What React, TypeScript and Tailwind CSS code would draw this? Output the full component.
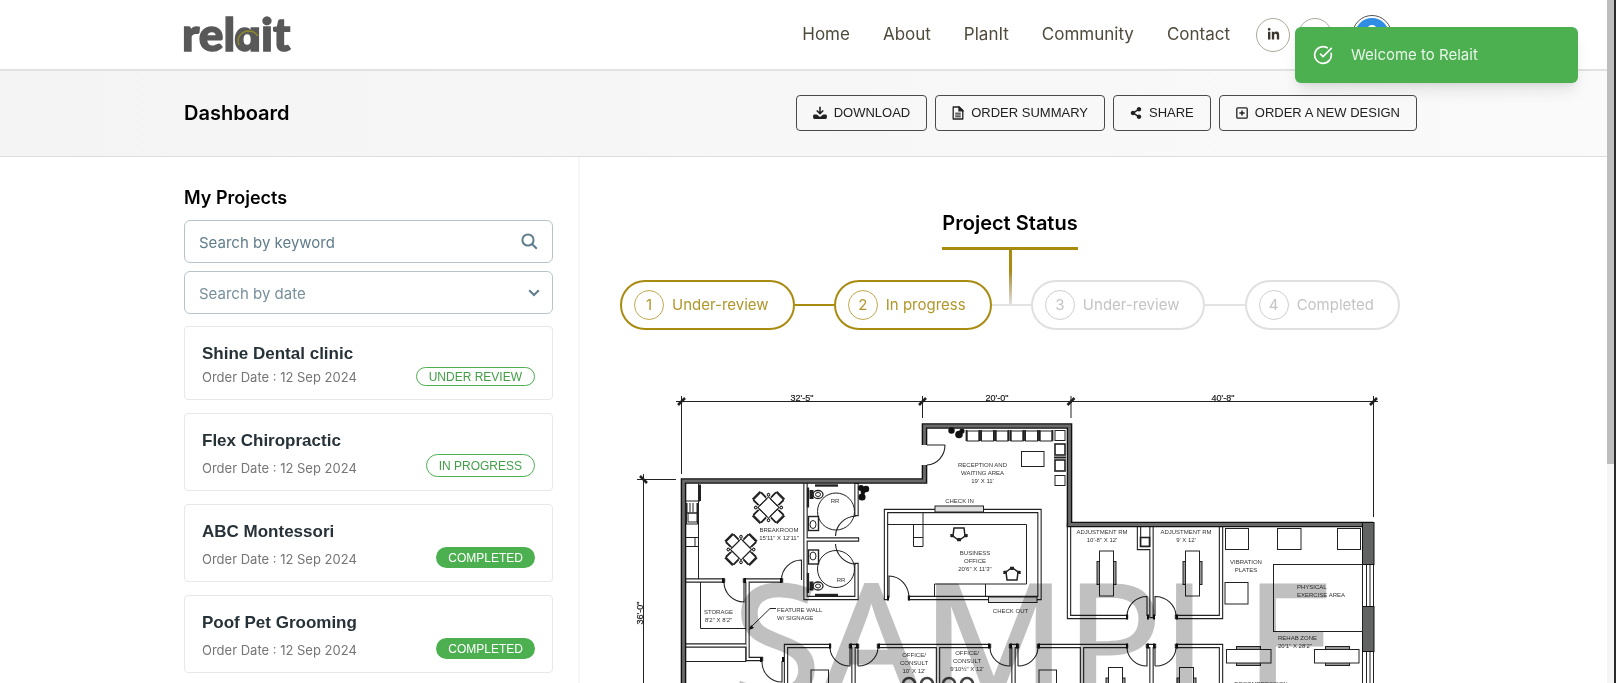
import React from "react";
import { CircleCheckBig } from "lucide-react";
import { FaLinkedinIn, FaFacebookF, FaShareAlt, FaUser } from "react-icons/fa";

type Status = "UNDER REVIEW" | "IN PROGRESS" | "COMPLETED";

const navItems = ["Home", "About", "PlanIt", "Community", "Contact"];

const projects: { name: string; date: string; status: Status }[] = [
  { name: "Shine Dental clinic", date: "12 Sep 2024", status: "UNDER REVIEW" },
  { name: "Flex Chiropractic", date: "12 Sep 2024", status: "IN PROGRESS" },
  { name: "ABC Montessori", date: "12 Sep 2024", status: "COMPLETED" },
  { name: "Poof Pet Grooming", date: "12 Sep 2024", status: "COMPLETED" },
  { name: "Shine Dental clinic", date: "12 Sep 2024", status: "COMPLETED" },
];

const badgeStyles: Record<Status, string> = {
  "UNDER REVIEW": "h-[19px] border border-[#4caf50] text-[#43a047]",
  "IN PROGRESS": "h-[23px] border border-[#4caf50] text-[#43a047]",
  COMPLETED: "h-[21px] bg-[#4caf50] text-white",
};

const steps = [
  { label: "Under-review", done: true },
  { label: "In progress", done: true },
  { label: "Under-review", done: false },
  { label: "Completed", done: false },
];

function Logo() {
  return (
    <svg width="112" height="66" viewBox="181 1 112 66" role="img" aria-label="relait">
      <g fill="#585858" stroke="#585858" strokeWidth="1.400" fontFamily="Lato, sans-serif" fontWeight={900} fontSize="46">
        <text x="181" y="50">rel</text>
        <text x="233" y="50" fontFamily="Inter, sans-serif" fontWeight={800} fontSize="42" className="[font-feature-settings:'cv11']">a</text>
        <text x="260" y="50">it</text>
      </g>
      <path d="M238 44c-3-7 2-14 10-14 4 0 7 2 9 5" fill="none" stroke="#8f8a2c" strokeWidth="1.400" />
    </svg>
  );
}

function DownloadIcon() {
  return (
    <svg width="14" height="14" viewBox="0 0 14 14" fill="currentColor" aria-hidden="true">
      <path d="M6.200.8h1.600v5l1.900-1.900 1.100 1.100L7 8.800 3.200 5l1.100-1.100 1.900 1.900z" />
      <path d="M1.500 8.500h2.300L7 11l3.200-2.500h2.300c.8 0 1.400.6 1.400 1.400v1.700c0 .8-.6 1.400-1.400 1.400h-11c-.8 0-1.400-.6-1.400-1.400V9.900c0-.8.6-1.400 1.400-1.400z" />
    </svg>
  );
}

function DocIcon() {
  return (
    <svg width="12" height="14" viewBox="0 0 12 14" fill="none" stroke="currentColor" strokeWidth="1.300" aria-hidden="true">
      <path d="M1.200 1h6l3.600 3.500V13H1.200z" strokeLinejoin="round" />
      <path d="M7 1v3.800h3.800z" fill="currentColor" />
      <path d="M3.200 7.200h5.600M3.200 9h5.600M3.200 10.800h5.600" strokeWidth="1" />
    </svg>
  );
}

function PlusBoxIcon() {
  return (
    <svg width="12" height="12" viewBox="0 0 12 12" fill="none" stroke="currentColor" strokeWidth="1.300" aria-hidden="true">
      <rect x=".8" y=".8" width="10.400" height="10.400" rx="1" />
      <path d="M6 3.400v5.200M3.400 6h5.200" strokeWidth="1.500" />
    </svg>
  );
}

function ActionButton({ icon, label }: { icon: React.ReactNode; label: string }) {
  return (
    <button
      type="button"
      className="flex h-9 items-center gap-[7px] rounded border border-[#4a4a4a] px-4 font-['Liberation_Sans',Arial,sans-serif] text-[13px] text-[#212121]"
    >
      {icon}
      {label}
    </button>
  );
}

const wall = "fill-none stroke-[#222]";

/* A partition drawn as two parallel lines. */
function Partition({ d }: { d: string }) {
  return (
    <>
      <path d={d} className={wall} strokeWidth="4.400" strokeLinecap="square" />
      <path d={d} fill="none" stroke="#fff" strokeWidth="2.200" strokeLinecap="square" />
    </>
  );
}

function Note({ x, y, lines, start }: { x: number; y: number; lines: string[]; start?: boolean }) {
  return (
    <text y={y} textAnchor={start ? "start" : "middle"}>
      {lines.map((line, i) => (
        <tspan key={line} x={x} dy={i === 0 ? 0 : 8}>
          {line}
        </tspan>
      ))}
    </text>
  );
}

function TreatmentTable({ x, y }: { x: number; y: number }) {
  return (
    <g>
      <rect x={x - 2.5} y={y + 10.5} width="19" height="23" fill="#999" />
      <rect x={x} y={y} width="14" height="45" fill="#fff" />
    </g>
  );
}

function DiningSet({ x, y }: { x: number; y: number }) {
  return (
    <g transform={`translate(${x} ${y}) rotate(45)`}>
      <rect x="-7.500" y="-7.500" width="15" height="15" />
      {[0, 90, 180, 270].map((a) => (
        <g key={a} transform={`rotate(${a})`}>
          <rect x="-5" y="-16" width="10" height="8.500" />
          <path d="M-5.500-17h11" strokeWidth="2" />
          <path d="M-5.500-16v7M5.500-16v7" strokeWidth="1.600" />
          <circle cx="9" cy="-9" r="1.300" />
        </g>
      ))}
    </g>
  );
}

function OfficeChair({ x, y, flip }: { x: number; y: number; flip?: boolean }) {
  return (
    <g transform={`translate(${x} ${y})${flip ? " rotate(180)" : ""}`} strokeWidth="1.500">
      <path d="M-5-5h10l1 8-4 3h-4l-4-3z" />
      <path d="M-8 3h3M5 3h3M0 5v3M-7.500 1v3M7.500 1v3M-2 7h4" strokeWidth="2.400" />
    </g>
  );
}

function Restroom({ y, flip }: { y: number; flip?: boolean }) {
  const s = flip ? -1 : 1;
  return (
    <g>
      <circle cx="836" cy={y} r="18.500" />
      <ellipse cx="818" cy={y - 17 * s} rx="5" ry="4" strokeWidth="1.300" />
      <ellipse cx="818" cy={y - 17 * s} rx="2.500" ry="2" />
      <rect x="810" y={y - 17 * s - 4} width="3" height="8" fill="#222" />
      <rect x="808.500" y={y + 12 * s - 7} width="10" height="14" strokeWidth="1.400" />
      <ellipse cx="813" cy={y + 13 * s} rx="3" ry="4" />
      <path d={`M808 ${y - 24 * s}V${y - 4 * s}`} strokeWidth="2.200" />
      <path d={`M815 ${y - 26 * s}h23`} strokeWidth="2.400" />
    </g>
  );
}

function FloorPlan() {
  return (
    <svg viewBox="620 380 780 440" className="block w-full" role="img" aria-label="Floor plan sample">
      {/* dimension lines */}
      <g className={wall} strokeWidth="1">
        <path d="M676 400.500H1378M681.500 395V473M922.500 395V417M1071 395V417M1373.500 395V516M643.500 473V820M637 478.500H676" />
        <path d="M678 404l7-7M919 404l7-7M1067.500 404l7-7M1370 404l7-7M640 475l7 7" strokeWidth="2.600" />
      </g>
      <g fill="#222" stroke="#222" strokeWidth=".2" fontFamily="Liberation Sans, Arial, sans-serif" fontSize="9" textAnchor="middle">
        <text x="802" y="400">32'-5"</text>
        <text x="997" y="400">20'-0"</text>
        <text x="1223" y="400">40'-8"</text>
        <text transform="translate(643 612) rotate(-90)">36'-0"</text>
      </g>

      {/* partitions */}
      <Partition d="M805.500 483V597H856.500V564M856.500 484V513M807 538.500H857" />
      <Partition d="M686 579.500H723M745 579.500H781M747.500 580V658H761M686 644.500H745" />
      <Partition d="M786 820V645H829M851 645H857M853.500 647V820M879 645H989M938 647V820M1011 645H1017M1013.500 647V820M1039 645H1126M1082 647V820M1148 645H1154M1151.500 647V820M1177 645H1221V820" />
      <Partition d="M886 597V510H1039.500V597H910" />
      <Partition d="M1069 524V616H1126M1151.500 524V615M1177 616H1221V524M1139 524V547H1150" />

      {/* outer walls */}
      <g fill="none">
        <path d="M683.500 820V480H924.500V464M924.500 444V425H1069.500V523.500H1373" stroke="#111" strokeWidth="5.600" />
        <path d="M683.500 820V480H924.500V464M924.500 444V425H1069.500V523.500H1373" stroke="#6a6a6a" strokeWidth="2.800" />
        <path d="M1362.500 563V605M1366.500 563V605M1370 563V605M1373.500 563V605M1362.500 651V820M1366.500 651V820M1370 651V820M1373.500 651V820" stroke="#222" />
      </g>
      <g fill="#626464" stroke="#111">
        <rect x="1362.500" y="521.500" width="11.500" height="42" />
        <rect x="1362.500" y="605.500" width="11.500" height="45" />
      </g>

      {/* doors */}
      <g className={wall} strokeWidth="1.100">
        <path d="M945 444H927M945 444A19 20 0 0 1 927 464" />
        <path d="M856 515A21 21 0 0 0 835.500 535M835.500 543A21 21 0 0 0 856 563" />
        <path d="M724 581A20 20 0 0 0 744 601V581M801.500 579V559A20 20 0 0 0 781.500 579" />
        <path d="M762 660A20 20 0 0 0 782 681V660M830 647A20 19 0 0 0 850 665V647M858 665V647M858 665A20 19 0 0 0 878 647" />
        <path d="M990 647A20 19 0 0 0 1010 665V647M1018 665V647M1018 665A20 19 0 0 0 1038 647M1127 647A20 19 0 0 0 1147 665V647M1155 665V647M1155 665A20 19 0 0 0 1176 647" />
        <path d="M889 597V575A20 22 0 0 1 909 597M1127 615A20 20 0 0 1 1147 595.500V615M1155 615V595.500A21 20 0 0 1 1176 615" />
      </g>
      <path d="M723 577v5M745 577v5M781 577v5M830 642.500v5M851 642.500v5M857 642.500v5M879 642.500v5M989 642.500v5M1011 642.500v5M1017 642.500v5M1039 642.500v5M1127 642.500v5M1148 642.500v5M1154 642.500v5M1177 642.500v5M1127 613.500v5M1148 613.500v5M1154 613.500v5M1177 613.500v5M888 594.500v5M909 594.500v5M761 656v5M783 656v5" stroke="#111" strokeWidth="2" />

      {/* furniture */}
      <g className={wall} strokeWidth="1">
        <path d="M698.500 483V578M700.500 581V627.500H746M686 500H700V483M686 536.500H698M686 545.500H698M695 536V545M686 660.500H746V646M686 523H698M687 502v10h10v-10M690 502v9M693 502v9" />
        <rect x="688" y="512" width="9" height="9" />
        <path d="M686 502V523M698 502V523M700 484V500" strokeWidth="2" />
        <DiningSet x={768.5} y={506.5} />
        <DiningSet x={741} y={548.5} />
        <Restroom y={510.5} />
        <Restroom y={568} flip />
        <path d="M887 523.500H1026.500V583H934.500V595M985.500 583V595M923 511V523M913.500 523V545.500H923V523M913.500 536.500H923" />
        <rect x="935" y="505" width="48.500" height="6" fill="#ddd" />
        <rect x="988.500" y="596" width="48.500" height="5.500" fill="#ddd" />
        <OfficeChair x={959} y={532} />
        <OfficeChair x={1012} y={574} flip />
        {[967, 981.5, 996, 1011, 1025.5, 1040].map((x) => (
          <g key={x}>
            <rect x={x} y="430" width="12" height="10" />
            <path d={`M${x - 0.5} 429V440M${x + 12.5} 429V440`} strokeWidth="1.800" />
          </g>
        ))}
        <rect x="1055" y="429.500" width="10" height="10" />
        <rect x="1055" y="443" width="10" height="11" strokeWidth="1.600" />
        <rect x="1055" y="459" width="10" height="11" strokeWidth="1.600" />
        <rect x="1055" y="474.500" width="10" height="10" />
        <path d="M1054 456.500H1066" strokeWidth="2" />
        <rect x="1021.500" y="450.500" width="22.500" height="15" />
        <rect x="1140.500" y="536.500" width="9" height="9" strokeWidth="1.600" />
        <TreatmentTable x={1099.5} y={550} />
        <TreatmentTable x={1185.5} y={550} />
        <TreatmentTable x={1108.5} y={666.5} />
        <TreatmentTable x={1179.5} y={666.5} />
        <rect x="811" y="669" width="17.500" height="45" />
        <rect x="1039" y="669" width="17.500" height="45" />
        <rect x="1225.500" y="527.500" width="23" height="21" />
        <rect x="1277.500" y="527.500" width="23.500" height="21" />
        <rect x="1337.500" y="527.500" width="23" height="21" />
        <rect x="1225" y="581.500" width="23" height="21.500" />
        <rect x="1273.500" y="563.500" width="89" height="67" />
        <rect x="1236.500" y="645.500" width="24" height="19" fill="#999" />
        <rect x="1226.500" y="648.500" width="44.500" height="13.500" fill="#fff" />
        <rect x="1325.500" y="645.500" width="24" height="19" fill="#999" />
        <rect x="1314.500" y="648.500" width="44.500" height="13.500" fill="#fff" />
        <path d="M776 607.500H770L750 627" />
        <g strokeWidth="2.600" stroke="#444">
          <circle cx="909" cy="683" r="6" />
          <circle cx="927" cy="683" r="6" />
          <circle cx="949" cy="683" r="6" />
          <circle cx="967" cy="683" r="6" />
        </g>
      </g>
      <g fill="#111">
        <path d="M749 629l2-5 3 3z" />
        <circle cx="951.500" cy="429.500" r="3.200" />
        <circle cx="959" cy="433.500" r="3.800" />
        <circle cx="962" cy="430" r="2.600" />
        <circle cx="861" cy="487" r="3" />
        <circle cx="866" cy="488" r="3.200" />
        <circle cx="862" cy="496" r="3.600" />
        <circle cx="863" cy="491" r="2.400" />
      </g>

      {/* room labels */}
      <g fill="#333" fontFamily="Liberation Sans, Arial, sans-serif" fontSize="6">
        <Note x={779} y={531} lines={["BREAKROOM", "15'11\" X 12'11\""]} />
        <Note x={718.5} y={613} lines={["STORAGE", "8'2\" X 8'2\""]} />
        <Note x={777} y={611} lines={["FEATURE WALL", "W/ SIGNAGE"]} start />
        <Note x={982.5} y={466} lines={["RECEPTION AND", "WAITING AREA", "19' X 11'"]} />
        <Note x={959.5} y={502} lines={["CHECK IN"]} />
        <Note x={975} y={554} lines={["BUSINESS", "OFFICE", "20'6\" X 11'3\""]} />
        <Note x={1010.5} y={612} lines={["CHECK OUT"]} />
        <Note x={1102} y={533} lines={["ADJUSTMENT RM", "10'-8\" X 12'"]} />
        <Note x={1186} y={533} lines={["ADJUSTMENT RM", "9' X 12'"]} />
        <Note x={1246} y={563} lines={["VIBRATION", "PLATES"]} />
        <Note x={1297} y={588} lines={["PHYSICAL", "EXERCISE AREA"]} start />
        <Note x={1278} y={639} lines={["REHAB ZONE", "20'1\" X 28'2\""]} start />
        <Note x={914} y={656} lines={["OFFICE/", "CONSULT", "10' X 12'"]} />
        <Note x={967} y={654} lines={["OFFICE/", "CONSULT", "9'10½\" X 12'"]} />
        <Note x={835} y={502} lines={["RR"]} />
        <Note x={841} y={581} lines={["RR"]} />
        <Note x={1261} y={685} lines={["DECOMPRESSION"]} />
      </g>

      <text x="733" y="698" fill="#c0c0c0" stroke="#c0c0c0" strokeWidth="3" fontFamily="Open Sans, sans-serif" fontSize="160" className="mix-blend-multiply">
        SAMPLE
      </text>
    </svg>
  );
}

export default function App() {
  return (
    <div className="flex h-screen bg-white font-[Inter,sans-serif] text-black">
      <div className="min-w-0 flex-1 overflow-hidden">
        <header className="flex h-[71px] items-center border-b-2 border-[#e2e2e2] pr-[215px] pl-[182px]">
          <a href="#home">
            <Logo />
          </a>
          <nav className="ml-auto flex gap-[33px] text-[17px] text-[#4f4a3c]">
            {navItems.map((item) => (
              <a key={item} href={`#${item.toLowerCase()}`}>
                {item}
              </a>
            ))}
          </nav>
          <div className="ml-[26px] flex items-center gap-2">
            <a href="#linkedin" aria-label="LinkedIn" className="grid size-[34px] place-items-center rounded-full border border-[#b0a999] text-[#3a362c]">
              <FaLinkedinIn size={13} />
            </a>
            <a href="#facebook" aria-label="Facebook" className="grid size-[34px] place-items-center rounded-full border border-[#b0a999] text-[#3a362c]">
              <FaFacebookF size={13} />
            </a>
            <button type="button" aria-label="Account" className="ml-3 grid size-10 place-items-center rounded-full border border-[#555]">
              <span className="grid size-[34px] place-items-center rounded-full bg-[#2f8de4] text-white">
                <FaUser size={20} />
              </span>
            </button>
          </div>
        </header>

        <section className="flex h-[86px] items-center border-b border-[#dcdfe0] bg-linear-to-r from-[#f4f4f4] to-[#fafafa] pr-[190px] pb-[2px] pl-[184px]">
          <h1 className="text-xl font-semibold">Dashboard</h1>
          <div className="ml-auto flex gap-2">
            <ActionButton icon={<DownloadIcon />} label="DOWNLOAD" />
            <ActionButton icon={<DocIcon />} label="ORDER SUMMARY" />
            <ActionButton icon={<FaShareAlt size={12} />} label="SHARE" />
            <ActionButton icon={<PlusBoxIcon />} label="ORDER A NEW DESIGN" />
          </div>
        </section>

        <div className="flex pr-[167px] pl-[184px]">
          <aside className="w-[396px] shrink-0 border-r-2 border-[#f7f7f7] pt-[27px] pr-[25px]">
            <h2 className="mb-2 text-lg leading-7 font-semibold">My Projects</h2>
            <div className="flex h-[43px] items-center rounded-md border border-[#b5c4cb] px-[14px]">
              <input
                type="text"
                aria-label="Search by keyword"
                placeholder="Search by keyword"
                className="min-w-0 flex-1 pt-[3px] text-[15px] outline-none placeholder:text-[#607d8b]"
              />
              <svg width="17" height="17" viewBox="0 0 17 17" fill="none" stroke="#607d8b" strokeWidth="2" aria-hidden="true">
                <circle cx="7" cy="7" r="5.600" />
                <path d="M11 11l4.800 4.800" />
              </svg>
            </div>
            <div className="relative mt-2">
              <select
                aria-label="Search by date"
                className="h-[43px] w-full appearance-none rounded-md border border-[#b5c4cb] bg-white px-[14px] pt-[3px] text-[15px] text-[#78909c]"
              >
                <option>Search by date</option>
              </select>
              <svg width="12" height="8" viewBox="0 0 12 8" fill="none" stroke="#607d8b" strokeWidth="2" className="pointer-events-none absolute top-[18px] right-[13px]" aria-hidden="true">
                <path d="M1.200 1.200L6 6l4.800-4.800" />
              </svg>
            </div>
            <ul className="mt-3 flex flex-col gap-[13px]">
              {projects.map((p, i) => (
                <li key={i} className="rounded border border-[#e6e8e9] px-[17px] pt-[14px] pb-[11px]">
                  <h3 className="font-['Liberation_Sans',Arial,sans-serif] text-[17px] leading-[25px] font-bold text-[#263238]">{p.name}</h3>
                  <div className="flex items-end justify-between">
                    <p className={p.status === "UNDER REVIEW" ? "text-[13px] leading-[22px] text-[#757575]" : "pt-1 text-[13px] leading-[22px] text-[#757575]"}>
                      Order Date : {p.date}
                    </p>
                    <span className={`${badgeStyles[p.status]} mb-[2px] flex items-center rounded-full px-3 font-['Liberation_Sans',Arial,sans-serif] text-xs`}>
                      {p.status}
                    </span>
                  </div>
                </li>
              ))}
            </ul>
          </aside>

          <main className="min-w-0 flex-1 px-10 pt-[52px]">
            <div className="flex flex-col items-center">
              <h2 className="border-b-3 border-[#a88b0f] pb-[10px] text-xl leading-7 font-semibold">Project Status</h2>
              <div className="-mb-6 h-[54px] w-[3px] bg-linear-to-b from-[#a88b0f] from-40% to-[#e0e0e0]" />
            </div>
            <ol className="flex items-center text-[15px]">
              {steps.map((s, i) => (
                <React.Fragment key={i}>
                  {i > 0 && <li aria-hidden="true" className={s.done ? "h-[2px] flex-1 bg-[#a88b0f]" : "h-[2px] flex-1 bg-[#e3e3e3]"} />}
                  <li
                    className={`flex h-[50px] items-center gap-2 rounded-full border-2 pr-6 pl-3 ${
                      s.done ? "border-[#a88b0f] text-[#b0962a]" : "border-[#e0e0e0] text-[#c4c4c4]"
                    }`}
                  >
                    <span className={`grid size-[30px] place-items-center rounded-full border ${s.done ? "border-[#bfa94f]" : "border-[#cfcfcf]"}`}>{i + 1}</span>
                    {s.label}
                  </li>
                </React.Fragment>
              ))}
            </ol>
            <div className="pt-[51px]">
              <FloorPlan />
            </div>
          </main>
        </div>
      </div>

      <div aria-hidden="true" className="w-[9px] border-r-2 border-[#2b2b2b] bg-[#f5f5f5]">
        <div className="h-[68%] bg-[#bdbdbd]" />
      </div>

      <div role="status" className="absolute top-[27px] right-[38px] flex h-14 w-[283px] items-center gap-[18px] rounded-md bg-[#4caf50] pl-[18px] text-[15px] text-[#e8f5e9] shadow-lg">
        <CircleCheckBig size={20} strokeWidth={2} className="text-white" />
        Welcome to Relait
      </div>
    </div>
  );
}
